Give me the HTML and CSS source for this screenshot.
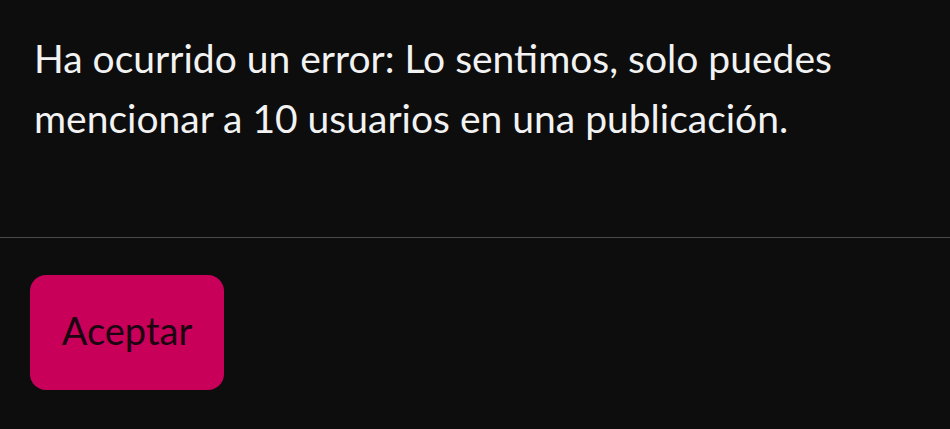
FILE: index.html
```html
<!DOCTYPE html>
<html lang="es">
<head>
  <meta charset="UTF-8" />
  <meta name="viewport" content="width=device-width, initial-scale=1.0"/>
  <title>Error</title>
  <link rel="stylesheet" href="styles.css">
</head>
<body>
  <div class="dialog">
    <p class="message">Ha ocurrido un error: Lo sentimos, solo puedes mencionar a 10 usuarios en una publicación.</p>
    <hr class="divider">
    <div class="actions">
      <button class="btn-accept">Aceptar</button>
    </div>
  </div>
</body>
</html>
```

FILE: styles.css
```css
body {
  margin: 0;
  background: #0d0d0d;
  font-family: Lato, "Noto Sans", sans-serif;
  color: #f2f2f2;
}
.dialog {
  width: 950px;
  height: 429px;
}
.message {
  margin: 0;
  padding: 28px 60px 0 34px;
  font-size: 39px;
  line-height: 60px;
}
.divider {
  margin: 89px 0 0;
  border: 0;
  border-top: 1px solid #4a4a4a;
}
.actions {
  padding: 37px 30px 0;
}
.btn-accept {
  width: 194px;
  height: 115px;
  padding: 0 0 6px;
  border: 0;
  border-radius: 16px;
  background: #c8005a;
  color: #1a0510;
  font-family: inherit;
  font-size: 38px;
  cursor: pointer;
}
```
